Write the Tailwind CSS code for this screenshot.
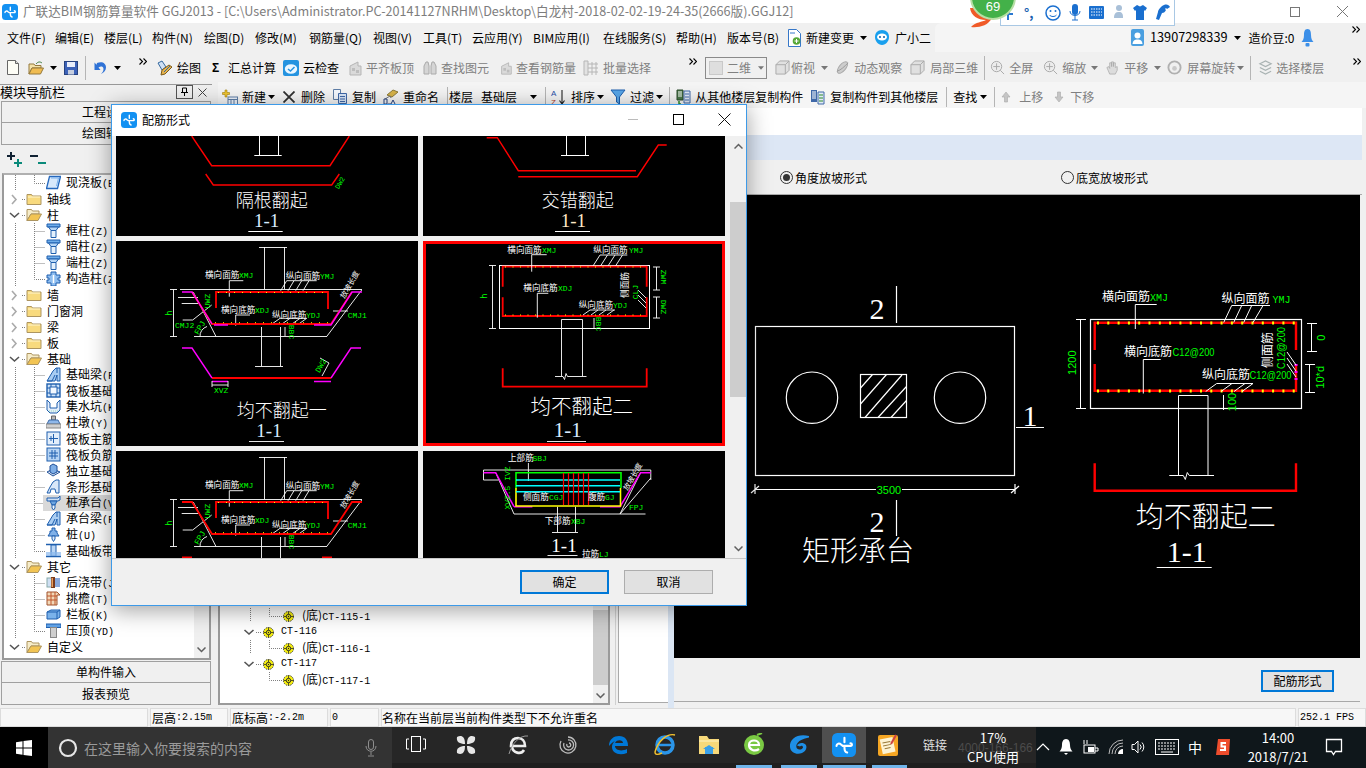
<!DOCTYPE html>
<html lang="zh-CN">
<head>
<meta charset="utf-8">
<title>广联达BIM钢筋算量软件</title>
<script src="https://cdn.jsdelivr.net/npm/@tailwindcss/browser@4"></script>
</head>
<body class="m-0 overflow-hidden">
<svg class="absolute w-0 h-0" aria-hidden="true">
  <symbol id="logo" viewBox="0 0 16 16"><rect width="16" height="16" rx="3.5" fill="#1391f2"/><path d="M3 8.600c0-1.600 1.900-2.100 3-.9l1.200.9h5.200c1.200 0 1.200-1.800-.1-1.800M8.300 3.200v3M8.300 9.600c0 1.800.4 3.200 1.800 3.400" fill="none" stroke="#fff" stroke-width="1.400" stroke-linecap="round"/></symbol>
  <symbol id="tri" viewBox="0 0 7 4"><path d="M0 0h7L3.500 4z" fill="#000"/></symbol>
  <symbol id="trig" viewBox="0 0 7 4"><path d="M0 0h7L3.500 4z" fill="#777"/></symbol>
  <symbol id="dbl" viewBox="0 0 8 7"><path d="M.5.500l3 3-3 3M4.500.500l3 3-3 3" fill="none" stroke="#000" stroke-width="1.100"/></symbol>
  <symbol id="doc" viewBox="0 0 12 15"><path d="M.5.500h8l3 3v11H.5z" fill="#fdfdf6" stroke="#666"/><path d="M8.500.500v3h3" fill="#ddd" stroke="#666"/></symbol>
  <symbol id="open" viewBox="0 0 16 14"><path d="M1 3h5l1 1.500h6V7H4L1 13z" fill="#f4e2a8" stroke="#94793c"/><path d="M4 7h11.500L12.500 13H1z" fill="#f0bc52" stroke="#94793c"/><path d="M8 3c2-2.500 4-2.500 6-1" fill="none" stroke="#3b7a3b"/></symbol>
  <symbol id="save" viewBox="0 0 14 14"><rect x=".5" y=".5" width="13" height="13" fill="#3c62b8" stroke="#27427f"/><rect x="3" y="1" width="8" height="5" fill="#e9eefb"/><rect x="4" y="9" width="6" height="4.500" fill="#c7cfdf"/></symbol>
  <symbol id="undo" viewBox="0 0 13 15"><path d="M3 3c5-2 9 0 9 4.500 0 3-2 5-5 6.500 2-2 2.800-3.800 2.400-5.800C9 6.200 6.500 6 4.500 7.500L6.500 10H.5V2.500l2 2.300z" fill="#2f72d6"/></symbol>
  <symbol id="brush" viewBox="0 0 16 16"><path d="M1 3l4-2 4 6-4 3z" fill="#cfe0f4" stroke="#34689f"/><path d="M5 10l7-5 3 2-7 7-4 1z" fill="#e7b44e" stroke="#7a5a1c"/><path d="M7 12l6-6" stroke="#34689f"/></symbol>
  <symbol id="cloud" viewBox="0 0 16 16"><rect width="16" height="16" rx="2" fill="#2493e0"/><ellipse cx="8" cy="9" rx="6.200" ry="4.800" fill="#eaf6ff"/><path d="M5 9l2.500 2L11.500 7" fill="none" stroke="#2493e0" stroke-width="1.500"/></symbol>
  <symbol id="gbox" viewBox="0 0 16 16"><path d="M3 15V6l8-4v4h3v9z" fill="#dadada" stroke="#b5b5b5"/><path d="M5 8h3v3H5zM9 10h3v3H9z" fill="#bdbdbd"/></symbol>
  <symbol id="gbino" viewBox="0 0 16 16"><path d="M2 14V6l2-4h2l1 4v8zM9 14V6l1-4h2l2 4v8z" fill="#d5d5d5" stroke="#aaa"/></symbol>
  <symbol id="ggrid" viewBox="0 0 16 16"><path d="M1 1h4v14H1zM5 4h10M5 8h10M5 12h10M9 2v13M13 2v13" fill="#e2e2e2" stroke="#b6b6b6"/></symbol>
  <symbol id="gcube" viewBox="0 0 16 16"><path d="M1 5l4-4h10v10l-4 4H1z" fill="#e0e0e0" stroke="#a9a9a9"/><path d="M1 5h10v10M11 5l4-4" fill="none" stroke="#a9a9a9"/></symbol>
  <symbol id="gswirl" viewBox="0 0 16 16"><ellipse cx="8" cy="8" rx="3.500" ry="7.500" transform="rotate(40 8 8)" fill="#cdcdcd" stroke="#aaa"/><path d="M2 12C6 11 10 7 14 3" stroke="#999" fill="none"/></symbol>
  <symbol id="gzoom" viewBox="0 0 16 16"><circle cx="7" cy="7" r="5.500" fill="#ececec" stroke="#a8a8a8"/><path d="M7 3.500v7M3.500 7h7M11 11l4 4" stroke="#a8a8a8" fill="none"/></symbol>
  <symbol id="ghand" viewBox="0 0 16 16"><path d="M5 15L2 8l2-1 1 2V3h2v4-5h2v5-4h2v5l2-1v4l-2 4z" fill="#dcdcdc" stroke="#aaa" stroke-width=".8"/></symbol>
  <symbol id="grot" viewBox="0 0 16 16"><circle cx="8" cy="8" r="6.500" fill="none" stroke="#b0b0b0" stroke-width="2"/><circle cx="8" cy="9" r="2.500" fill="#c9c9c9"/></symbol>
  <symbol id="glayer" viewBox="0 0 16 16"><path d="M2 4l6-3 6 3-6 3zM2 8l6 3 6-3M2 12l6 3 6-3" fill="none" stroke="#a9b3b3" stroke-width="1.300"/></symbol>
  <symbol id="new2" viewBox="0 0 16 16"><path d="M3 1h2v2.500h2.500v2H5V8H3V5.500H.5v-2H3z" fill="#f0c52f" stroke="#a37f0c" stroke-width=".6"/><rect x="6" y="8" width="9.500" height="7.500" fill="#eef4fc" stroke="#5f7fa8"/><path d="M6 10.500h9.500M9 10.500v5M12 10.500v5" stroke="#5f7fa8"/></symbol>
  <symbol id="x" viewBox="0 0 12 12"><path d="M.5.500l11 11M11.500.500l-11 11" stroke="#2f2f2f" stroke-width="1.800" fill="none"/></symbol>
  <symbol id="copy" viewBox="0 0 14 15"><path d="M.5.500h7v10H.5z" fill="#f5f9ff" stroke="#5f7fa8"/><path d="M5.500 4.500h8v10h-8z" fill="#d8e6f8" stroke="#3f68a8"/><path d="M7 7.500h5M7 10h5M7 12.500h5" stroke="#3f68a8"/></symbol>
  <symbol id="ren" viewBox="0 0 15 15"><path d="M4 6l6-5 5 2-6 5z" fill="#d8b44a" stroke="#8b7a3a"/><path d="M2 10l5-3 1 2" stroke="#777" fill="none"/><path d="M1 15V10h3v5zM8 15l2-4 2 4M5 15h3" fill="none" stroke="#27427f"/></symbol>
  <symbol id="filt" viewBox="0 0 16 16"><path d="M1 1h14L9.500 8v7l-3-2V8z" fill="#58a6e8" stroke="#1d5fae"/></symbol>
  <symbol id="fromf" viewBox="0 0 15 16"><path d="M1 1h6v10H1z" fill="#4a7a4a" stroke="#2a4a2a"/><path d="M2 3h4M2 5h4M2 7h4" stroke="#fff"/><path d="M8 2h6v12H8z" fill="#e2eaf6" stroke="#3f68a8"/><path d="M9 5h4M9 8h4M9 11h4" stroke="#3f68a8"/><path d="M3 12v3h2" stroke="#2a8a2a" fill="none" stroke-width="1.500"/></symbol>
  <symbol id="tof" viewBox="0 0 15 16"><path d="M1 1h6v12H1z" fill="#3f68a8"/><path d="M2 3h4M2 5h4M2 7h4M2 9h4" stroke="#fff"/><path d="M8 3h6v12H8z" fill="#e2eaf6" stroke="#3f68a8"/><path d="M9 6h4M9 9h4M9 12h4" stroke="#2a8a2a"/></symbol>
  <symbol id="up" viewBox="0 0 10 12"><path d="M5 1L1 6h2.500v5h3V6H9z" fill="#c5c5c5" stroke="#aaa" stroke-width=".6"/></symbol>
  <symbol id="dn" viewBox="0 0 10 12"><path d="M5 11L1 6h2.500V1h3v5H9z" fill="#c5c5c5" stroke="#aaa" stroke-width=".6"/></symbol>
  <symbol id="chg" viewBox="0 0 13 18"><path d="M.5.500h8l4 4v13H.5z" fill="#fff" stroke="#3677c8"/><path d="M2 4h5" stroke="#3677c8"/><circle cx="8.500" cy="12" r="3.800" fill="#57a838"/><path d="M8.500 10v4M6.500 12h4" stroke="#fff"/></symbol>
  <symbol id="bot" viewBox="0 0 16 18"><path d="M8 1c4.500 0 7 3 7 7s-3 8-7 8-7-4-7-8 2.500-7 7-7z" fill="#19a0ee"/><ellipse cx="8" cy="8" rx="5" ry="3.500" fill="#fff"/><circle cx="6" cy="8" r="1" fill="#0b5fa8"/><circle cx="10" cy="8" r="1" fill="#0b5fa8"/></symbol>
  <symbol id="user" viewBox="0 0 13 17"><rect width="13" height="17" rx="2" fill="#4a9fe0"/><circle cx="6.500" cy="6.500" r="3" fill="#fff"/><path d="M1.500 15c.5-3.500 2-4.500 5-4.500s4.500 1 5 4.500z" fill="#fff"/></symbol>
  <symbol id="bell" viewBox="0 0 13 20"><path d="M6.500 1C9.500 1 10 4 10 7c0 4 1.500 6 2.500 7H.5C1.500 13 3 11 3 7c0-3 .5-6 3.500-6z" fill="#3c8fe8"/><rect x="4.500" y="15" width="4" height="3.500" rx="1" fill="#3c8fe8"/></symbol>
  <symbol id="plus" viewBox="0 0 16 16"><path d="M11 7v8M7 11h8" stroke="#0a8a7a" stroke-width="2" fill="none"/><path d="M4 0v8M0 4h8" stroke="#123" stroke-width="2" fill="none"/></symbol>
  <symbol id="minus" viewBox="0 0 16 16"><path d="M0 4h8" stroke="#123" stroke-width="2"/><path d="M8 11h8" stroke="#0a8a7a" stroke-width="2"/></symbol>
  <symbol id="fc" viewBox="0 0 16 15"><path d="M1 3.500h4.500l1 1.500H15v8.500H1z" fill="#f8da7e" stroke="#ad9560"/><path d="M2 6h12" stroke="#fff6cf"/></symbol>
  <symbol id="fo" viewBox="0 0 16 15"><path d="M1 2.500h4.500l1 1.500H13v3H5L1 13.500z" fill="#f6ecc9" stroke="#ad9560"/><path d="M5 7h10.500L12 13.500H1z" fill="#f2c453" stroke="#ad9560"/></symbol>
  <symbol id="slab" viewBox="0 0 15 15"><path d="M3.500 1.500h11L11.500 13.500H.5z" fill="#d8e9fb" stroke="#2568bd" stroke-width="1.300"/><path d="M5 3h7.500l-2 8" fill="none" stroke="#7ab2ee"/></symbol>
  <symbol id="colt" viewBox="0 0 15 15"><path d="M1 1h13v3H1z" fill="#6eadea" stroke="#1f5fae"/><path d="M2.500 4h10L10 7.500H5z" fill="#b6d6f6" stroke="#1f5fae"/><path d="M5 7.500h5v7H5z" fill="#e3f0fc" stroke="#1f5fae"/></symbol>
  <symbol id="gcol" viewBox="0 0 15 15"><path d="M5 1h5v3h4v3h-2v2h2v3h-4v3H5v-3H1V9h2V7H1V4h4z" fill="#8fbef0" stroke="#1f5fae"/><path d="M7.500 4v8" stroke="#fff" stroke-width="1.500"/></symbol>
  <symbol id="beam" viewBox="0 0 15 15"><path d="M1 14L7 4l3-3h4v13h-3V8l-2 6z" fill="#a9cdf2" stroke="#1f5fae"/><path d="M1 14h5l3-6M11 1v5" fill="none" stroke="#1f5fae"/></symbol>
  <symbol id="raft" viewBox="0 0 15 15"><rect x="1" y="1" width="13" height="13" fill="#cfe3f8" stroke="#1f5fae" stroke-width="1.400"/><rect x="4" y="4" width="7" height="7" fill="#f4f9ff" stroke="#1f5fae"/><path d="M1 5h3M1 10h3M11 5h3M11 10h3M5 1v3M10 1v3M5 11v3M10 11v3" stroke="#1f5fae"/></symbol>
  <symbol id="pit" viewBox="0 0 15 15"><path d="M1 1l3 3v5h7V4l3-3v10l-3 3H4l-3-3z" fill="#e4eefb" stroke="#1f5fae"/><path d="M3 12h9" stroke="#9db" stroke-dasharray="1 1"/></symbol>
  <symbol id="pier" viewBox="0 0 15 15"><path d="M5.500 1h4v4h-4z" fill="#b8b8b8" stroke="#666"/><path d="M3 5h9l2 4H1z" fill="#8fb8ea" stroke="#3c6aa8"/><path d="M0 9h15v4H0z" fill="#d0d0d0" stroke="#888"/></symbol>
  <symbol id="rmain" viewBox="0 0 15 15"><rect x="1" y="1" width="13" height="13" fill="#e2eefb" stroke="#1f5fae"/><path d="M3 7.500h9M7.500 3v9M5 5v5" stroke="#1f5fae" fill="none"/></symbol>
  <symbol id="rneg" viewBox="0 0 15 15"><rect x="1" y="1" width="13" height="13" fill="#b6d4f4" stroke="#1f5fae"/><path d="M3 6h9M3 9h9M6 3v9M9 3v9" stroke="#1f5fae" fill="none"/></symbol>
  <symbol id="iso" viewBox="0 0 15 15"><path d="M1 9l6-3 7 3-7 4z" fill="#dfe9f6" stroke="#1f4f98"/><path d="M4 9V3l3-2 4 2v6l-4 2z" fill="#7eaee6" stroke="#1f4f98"/></symbol>
  <symbol id="strip" viewBox="0 0 15 15"><path d="M1 14l3-6 3-5 3-2h3v13h-3l-1-4H5l-1 4z" fill="#d9e7f8" stroke="#1f5fae"/></symbol>
  <symbol id="cap" viewBox="0 0 15 15"><path d="M1 3h11l2-2v4l-2 1H1z" fill="#cfe0f4" stroke="#1f5fae"/><path d="M4 6h7L9 10H6z" fill="#6ea5e0" stroke="#1f5fae"/><path d="M6 10h3v3l-1.500 2L6 13z" fill="#f0f6fd" stroke="#1f5fae"/></symbol>
  <symbol id="pile" viewBox="0 0 15 15"><path d="M6 1h3v3h2v2l2 3H2l2-3V4h2z" fill="#7fb0e8" stroke="#1f5fae"/><path d="M6 9h3v3l-1.500 2.500L6 12z" fill="#dceafa" stroke="#1f5fae"/></symbol>
  <symbol id="band" viewBox="0 0 15 15"><path d="M0 1.500h15M0 13.500h15" stroke="#1f5fae" stroke-width="1.400"/><rect x="5" y="2" width="5" height="11" fill="#b9d5f4" stroke="#1f5fae"/><rect x="0" y="9" width="15" height="4" fill="#8ab8ec" opacity=".7"/></symbol>
  <symbol id="post" viewBox="0 0 15 15"><rect x="1" y="3" width="5" height="9" fill="#cfdff3" stroke="#8aa"/><rect x="9" y="3" width="5" height="9" fill="#8aa9dc"/><rect x="5" y="2" width="4" height="11" fill="#7a3a1c"/><rect x="5.500" y="3" width="1.500" height="9" fill="#e8a060"/></symbol>
  <symbol id="eave" viewBox="0 0 15 15"><path d="M1 1h10l3 3h-3v10H1z" fill="#f2d8b8" stroke="#a0522d"/><path d="M1 5h10M1 9h10M5 1v13M9 1v13" stroke="#c0562c"/></symbol>
  <symbol id="rail" viewBox="0 0 15 15"><path d="M1 5l4-2h9v7l-3 2H1z" fill="#7ab2ea" stroke="#1f5fae"/><path d="M1 5h10v7M11 5l3-2" fill="none" stroke="#1f5fae"/></symbol>
  <symbol id="cope" viewBox="0 0 15 15"><rect x="0" y="1" width="15" height="3.500" fill="#5fa0e4" stroke="#1f5fae"/><rect x="4.500" y="4.500" width="6" height="10" fill="#cfcfcf" stroke="#888"/></symbol>
  <symbol id="ro" viewBox="0 0 26 16"><path d="M10 6l4.500 4L19 6" fill="none" stroke="#555" stroke-width="1.600"/><path d="M22 8.500h4" stroke="#808080" stroke-dasharray="1 1"/></symbol>
  <symbol id="rc" viewBox="0 0 26 16"><path d="M12 4l4 4.500-4 4.500" fill="none" stroke="#aaa" stroke-width="1.600"/><path d="M22 8.500h4" stroke="#808080" stroke-dasharray="1 1"/></symbol>
  <symbol id="cm" viewBox="0 0 46 16"><path d="M15.500 0v16M34.500 0v16M34.500 8.500H45" stroke="#808080" stroke-dasharray="1 1" fill="none"/></symbol>
  <symbol id="cl" viewBox="0 0 46 16"><path d="M15.500 0v16M34.500 0v8.500H45" stroke="#808080" stroke-dasharray="1 1" fill="none"/></symbol>
  <symbol id="gold" viewBox="0 0 12 12"><circle cx="6" cy="6" r="5.500" fill="#f5ee10" stroke="#222" stroke-width="1" stroke-dasharray="1.400 1.100"/><path d="M6 .5v11M.5 6h11" stroke="#222" stroke-width=".8"/><circle cx="6" cy="6" r="2.400" fill="#f5ee10" stroke="#222" stroke-width="1"/><circle cx="6" cy="6" r=".7" fill="#222"/></symbol>
  <symbol id="zr" viewBox="0 0 43 16"><path d="M24.500 6l4.500 4 4.500-4" fill="none" stroke="#555" stroke-width="1.600"/><path d="M36 8.500h6" stroke="#808080" stroke-dasharray="1 1"/></symbol>
  <symbol id="zc" viewBox="0 0 63 16"><path d="M30.500 0v14" stroke="#808080" stroke-dasharray="1 1"/><path d="M49.500 0v8.500H62" stroke="#808080" stroke-dasharray="1 1" fill="none"/></symbol>
</svg>

<div class="relative w-[1366px] h-[768px] overflow-hidden bg-[#f0f0f0] text-[12px] text-black [font-family:'Noto_Sans_CJK_SC','Liberation_Sans',sans-serif] leading-none">

  <!-- title bar -->
  <div class="h-[23px] bg-white flex items-center">
    <svg class="ml-[2px] w-[16px] h-[16px] shrink-0"><use href="#logo"/></svg>
    <span class="ml-[5px] text-[12.63px] text-[#7d7d7d] whitespace-nowrap">广联达BIM钢筋算量软件 GGJ2013 - [C:\Users\Administrator.PC-20141127NRHM\Desktop\白龙村-2018-02-02-19-24-35(2666版).GGJ12]</span>
    <div class="ml-auto flex items-center">
      <div class="w-[10px] h-[10px] border border-[#777] mr-[37px]"></div>
      <svg class="w-[11px] h-[11px] mr-[18px]" viewBox="0 0 11 11"><path d="M0 0l11 11M11 0L0 11" stroke="#777"/></svg>
    </div>
  </div>

  <!-- menu bar -->
  <div class="h-[30px] flex items-center pb-[1px]">
    <div class="w-[784px] pl-[7px] flex items-center whitespace-nowrap shrink-0">
      <span class="w-[48px]">文件(F)</span><span class="w-[49px]">编辑(E)</span><span class="w-[48px]">楼层(L)</span><span class="w-[52px]">构件(N)</span><span class="w-[51px]">绘图(D)</span><span class="w-[54px]">修改(M)</span><span class="w-[64px]">钢筋量(Q)</span><span class="w-[50px]">视图(V)</span><span class="w-[49px]">工具(T)</span><span class="w-[61px]">云应用(Y)</span><span class="w-[70px]">BIM应用(I)</span><span class="w-[73px]">在线服务(S)</span><span class="w-[51px]">帮助(H)</span><span>版本号(B)</span>
    </div>
    <svg class="ml-[4px] w-[13px] h-[18px] shrink-0"><use href="#chg"/></svg>
    <span class="ml-[5px]">新建变更</span>
    <svg class="ml-[6px] w-[7px] h-[4px]"><use href="#tri"/></svg>
    <svg class="ml-[7px] w-[16px] h-[18px]"><use href="#bot"/></svg>
    <span class="ml-[5px]">广小二</span>
    <div class="ml-[4px] w-[195px] h-[29px] bg-[#f5f5f5] rounded-tl-md"></div>
    <svg class="ml-[1px] w-[13px] h-[17px]"><use href="#user"/></svg>
    <span class="ml-[6px] text-[12.7px]">13907298339</span>
    <svg class="ml-[6px] w-[7px] h-[4px]"><use href="#tri"/></svg>
    <span class="ml-[8px]">造价豆:0</span>
    <svg class="ml-[6px] w-[13px] h-[20px]"><use href="#bell"/></svg>
    <svg class="ml-[38px] w-[8px] h-[7px] -translate-y-[8px]"><use href="#dbl"/></svg>
  </div>

  <!-- main toolbar -->
  <div class="h-[29px] flex items-center whitespace-nowrap">
    <svg class="ml-[7px] w-[12px] h-[15px]"><use href="#doc"/></svg>
    <svg class="ml-[9px] w-[16px] h-[14px]"><use href="#open"/></svg>
    <svg class="ml-[6px] w-[7px] h-[4px]"><use href="#tri"/></svg>
    <svg class="ml-[7px] w-[14px] h-[14px]"><use href="#save"/></svg>
    <div class="ml-[7px] w-px h-[24px] bg-[#b5b5b5]"></div>
    <svg class="ml-[8px] w-[13px] h-[15px]"><use href="#undo"/></svg>
    <svg class="ml-[7px] w-[7px] h-[4px]"><use href="#tri"/></svg>
    <svg class="ml-[18px] w-[8px] h-[7px] -translate-y-[6px]"><use href="#dbl"/></svg>
    <svg class="ml-[10px] w-[16px] h-[16px]"><use href="#brush"/></svg>
    <span class="ml-[4px]">绘图</span>
    <span class="ml-[11px] w-[9px] font-bold [font-family:'Liberation_Sans']">Σ</span>
    <span class="ml-[7px]">汇总计算</span>
    <svg class="ml-[7px] w-[16px] h-[16px]"><use href="#cloud"/></svg>
    <span class="ml-[4px]">云检查</span>
    <svg class="ml-[8px] w-[16px] h-[16px]"><use href="#gbox"/></svg>
    <span class="ml-[3px] text-[#808080]">平齐板顶</span>
    <svg class="ml-[8px] w-[16px] h-[16px]"><use href="#gbino"/></svg>
    <span class="ml-[3px] text-[#808080]">查找图元</span>
    <svg class="ml-[10px] w-[14px] h-[14px]"><use href="#gbox"/></svg>
    <span class="ml-[3px] text-[#808080]">查看钢筋量</span>
    <svg class="ml-[7px] w-[16px] h-[16px]"><use href="#ggrid"/></svg>
    <span class="ml-[4px] text-[#808080]">批量选择</span>
    <svg class="ml-[38px] w-[8px] h-[7px] -translate-y-[6px]"><use href="#dbl"/></svg>
    <div class="ml-[8px] w-[62px] h-[22px] border border-[#8a8a8a] flex items-center">
      <div class="ml-[3px] w-[14px] h-[14px] bg-[#dedede] border border-[#c9c9c9]"></div>
      <span class="ml-[4px] text-[#808080]">二维</span>
      <svg class="ml-[7px] w-[6px] h-[4px]"><use href="#trig"/></svg>
    </div>
    <svg class="ml-[8px] w-[15px] h-[15px]"><use href="#gcube"/></svg>
    <span class="ml-[1px] text-[#808080]">俯视</span>
    <svg class="ml-[6px] w-[7px] h-[4px]"><use href="#trig"/></svg>
    <svg class="ml-[7px] w-[15px] h-[15px]"><use href="#gswirl"/></svg>
    <span class="ml-[4px] text-[#808080]">动态观察</span>
    <svg class="ml-[8px] w-[15px] h-[15px]"><use href="#gcube"/></svg>
    <span class="ml-[5px] text-[#808080]">局部三维</span>
    <div class="ml-[6px] w-px h-[24px] bg-[#b5b5b5]"></div>
    <svg class="ml-[5px] w-[15px] h-[15px]"><use href="#gzoom"/></svg>
    <span class="ml-[4px] text-[#808080]">全屏</span>
    <svg class="ml-[10px] w-[15px] h-[15px]"><use href="#gzoom"/></svg>
    <span class="ml-[4px] text-[#808080]">缩放</span>
    <svg class="ml-[5px] w-[7px] h-[4px]"><use href="#trig"/></svg>
    <svg class="ml-[7px] w-[15px] h-[15px]"><use href="#ghand"/></svg>
    <span class="ml-[4px] text-[#808080]">平移</span>
    <svg class="ml-[6px] w-[7px] h-[4px]"><use href="#trig"/></svg>
    <svg class="ml-[6px] w-[15px] h-[15px]"><use href="#grot"/></svg>
    <span class="ml-[5px] text-[#808080]">屏幕旋转</span>
    <svg class="ml-[2px] w-[7px] h-[4px]"><use href="#trig"/></svg>
    <div class="ml-[6px] w-px h-[24px] bg-[#b5b5b5]"></div>
    <svg class="ml-[7px] w-[15px] h-[15px]"><use href="#glayer"/></svg>
    <span class="ml-[3px] text-[#808080]">选择楼层</span>
    <svg class="ml-[29px] w-[8px] h-[7px] -translate-y-[6px]"><use href="#dbl"/></svg>
  </div>

  <!-- main area -->
  <div class="h-[626px] flex">
    <!-- left navigator -->
    <div class="w-[212px] shrink-0 h-[623px] flex flex-col">
      <div class="h-[17px] mt-[2px] border-t border-[#999] flex items-center text-[13px] relative pb-[3px]">
        <span class="whitespace-nowrap">模块导航栏</span>
        <div class="ml-auto mr-[19px] w-[17px] h-[14px] border border-[#555] flex items-center justify-center">
          <svg class="w-[9px] h-[9px]" viewBox="0 0 9 9"><path d="M2.500 1h4v4.500h-4zM1 5.500h7M4.500 5.500V9" fill="none" stroke="#000"/></svg>
        </div>
        <svg class="absolute left-[198px] top-[3px] w-[9px] h-[9px]" viewBox="0 0 9 9"><path d="M.5.500l8 8M8.500.500l-8 8" stroke="#444"/></svg>
      </div>
      <div class="h-[22px] mx-px border border-[#a0a0a0] bg-[#f0f0f0] flex items-center justify-center">工程设置</div>
      <div class="h-[22px] mx-px border-x border-b border-[#a0a0a0] flex items-center justify-center">绘图输入</div>
      <div class="h-[28px] flex items-center pt-[2px]">
        <svg class="ml-[7px] w-[16px] h-[16px]"><use href="#plus"/></svg>
        <svg class="ml-[7px] w-[16px] h-[16px]"><use href="#minus"/></svg>
      </div>
      <!-- tree -->
      <div class="ml-[2px] w-[209px] h-[488px] border-2 border-[#9a9a9a] border-t-[#b0b0b0] bg-white flex overflow-hidden">
        <div class="flex-1 min-w-0 whitespace-nowrap -ml-[4px] text-[12px]">
          <div class="h-4 flex items-center"><svg class="w-[46px] h-4 shrink-0"><use href="#cl"/></svg><svg class="w-[15px] h-[15px]"><use href="#slab"/></svg><span class="ml-[5px]">现浇板<span class="text-[10px] [font-family:'Liberation_Mono']">(B)</span></span></div>
          <div class="h-4 flex items-center"><svg class="w-[26px] h-4 shrink-0"><use href="#rc"/></svg><svg class="w-[16px] h-[15px]"><use href="#fc"/></svg><span class="ml-[5px]">轴线</span></div>
          <div class="h-4 flex items-center"><svg class="w-[26px] h-4 shrink-0"><use href="#ro"/></svg><svg class="w-[16px] h-[15px]"><use href="#fo"/></svg><span class="ml-[5px]">柱</span></div>
          <div class="h-4 flex items-center"><svg class="w-[46px] h-4 shrink-0"><use href="#cm"/></svg><svg class="w-[15px] h-[15px]"><use href="#colt"/></svg><span class="ml-[5px]">框柱<span class="text-[10px] [font-family:'Liberation_Mono']">(Z)</span></span></div>
          <div class="h-4 flex items-center"><svg class="w-[46px] h-4 shrink-0"><use href="#cm"/></svg><svg class="w-[15px] h-[15px]"><use href="#colt"/></svg><span class="ml-[5px]">暗柱<span class="text-[10px] [font-family:'Liberation_Mono']">(Z)</span></span></div>
          <div class="h-4 flex items-center"><svg class="w-[46px] h-4 shrink-0"><use href="#cm"/></svg><svg class="w-[15px] h-[15px]"><use href="#colt"/></svg><span class="ml-[5px]">端柱<span class="text-[10px] [font-family:'Liberation_Mono']">(Z)</span></span></div>
          <div class="h-4 flex items-center"><svg class="w-[46px] h-4 shrink-0"><use href="#cl"/></svg><svg class="w-[15px] h-[15px]"><use href="#gcol"/></svg><span class="ml-[5px]">构造柱<span class="text-[10px] [font-family:'Liberation_Mono']">(Z)</span></span></div>
          <div class="h-4 flex items-center"><svg class="w-[26px] h-4 shrink-0"><use href="#rc"/></svg><svg class="w-[16px] h-[15px]"><use href="#fc"/></svg><span class="ml-[5px]">墙</span></div>
          <div class="h-4 flex items-center"><svg class="w-[26px] h-4 shrink-0"><use href="#rc"/></svg><svg class="w-[16px] h-[15px]"><use href="#fc"/></svg><span class="ml-[5px]">门窗洞</span></div>
          <div class="h-4 flex items-center"><svg class="w-[26px] h-4 shrink-0"><use href="#rc"/></svg><svg class="w-[16px] h-[15px]"><use href="#fc"/></svg><span class="ml-[5px]">梁</span></div>
          <div class="h-4 flex items-center"><svg class="w-[26px] h-4 shrink-0"><use href="#rc"/></svg><svg class="w-[16px] h-[15px]"><use href="#fc"/></svg><span class="ml-[5px]">板</span></div>
          <div class="h-4 flex items-center"><svg class="w-[26px] h-4 shrink-0"><use href="#ro"/></svg><svg class="w-[16px] h-[15px]"><use href="#fo"/></svg><span class="ml-[5px]">基础</span></div>
          <div class="h-4 flex items-center"><svg class="w-[46px] h-4 shrink-0"><use href="#cm"/></svg><svg class="w-[15px] h-[15px]"><use href="#beam"/></svg><span class="ml-[5px]">基础梁<span class="text-[10px] [font-family:'Liberation_Mono']">(F)</span></span></div>
          <div class="h-4 flex items-center"><svg class="w-[46px] h-4 shrink-0"><use href="#cm"/></svg><svg class="w-[15px] h-[15px]"><use href="#raft"/></svg><span class="ml-[5px]">筏板基础</span></div>
          <div class="h-4 flex items-center"><svg class="w-[46px] h-4 shrink-0"><use href="#cm"/></svg><svg class="w-[15px] h-[15px]"><use href="#pit"/></svg><span class="ml-[5px]">集水坑<span class="text-[10px] [font-family:'Liberation_Mono']">(K)</span></span></div>
          <div class="h-4 flex items-center"><svg class="w-[46px] h-4 shrink-0"><use href="#cm"/></svg><svg class="w-[15px] h-[15px]"><use href="#pier"/></svg><span class="ml-[5px]">柱墩<span class="text-[10px] [font-family:'Liberation_Mono']">(Y)</span></span></div>
          <div class="h-4 flex items-center"><svg class="w-[46px] h-4 shrink-0"><use href="#cm"/></svg><svg class="w-[15px] h-[15px]"><use href="#rmain"/></svg><span class="ml-[5px]">筏板主筋</span></div>
          <div class="h-4 flex items-center"><svg class="w-[46px] h-4 shrink-0"><use href="#cm"/></svg><svg class="w-[15px] h-[15px]"><use href="#rneg"/></svg><span class="ml-[5px]">筏板负筋</span></div>
          <div class="h-4 flex items-center"><svg class="w-[46px] h-4 shrink-0"><use href="#cm"/></svg><svg class="w-[15px] h-[15px]"><use href="#iso"/></svg><span class="ml-[5px]">独立基础</span></div>
          <div class="h-4 flex items-center"><svg class="w-[46px] h-4 shrink-0"><use href="#cm"/></svg><svg class="w-[15px] h-[15px]"><use href="#strip"/></svg><span class="ml-[5px]">条形基础</span></div>
          <div class="h-4 flex items-center"><svg class="w-[43px] h-4 shrink-0" viewBox="0 0 43 16"><path d="M15.500 0v16M34.500 0v16M34.500 8.500H43" stroke="#808080" stroke-dasharray="1 1" fill="none"/></svg><div class="flex-1 h-4 bg-[#d9d9d9] pl-[3px] flex items-center"><svg class="w-[15px] h-[15px]"><use href="#cap"/></svg><span class="ml-[5px]">桩承台<span class="text-[10px] [font-family:'Liberation_Mono']">(V)</span></span></div></div>
          <div class="h-4 flex items-center"><svg class="w-[46px] h-4 shrink-0"><use href="#cm"/></svg><svg class="w-[15px] h-[15px]"><use href="#beam"/></svg><span class="ml-[5px]">承台梁<span class="text-[10px] [font-family:'Liberation_Mono']">(F)</span></span></div>
          <div class="h-4 flex items-center"><svg class="w-[46px] h-4 shrink-0"><use href="#cm"/></svg><svg class="w-[15px] h-[15px]"><use href="#pile"/></svg><span class="ml-[5px]">桩<span class="text-[10px] [font-family:'Liberation_Mono']">(U)</span></span></div>
          <div class="h-4 flex items-center"><svg class="w-[46px] h-4 shrink-0"><use href="#cl"/></svg><svg class="w-[15px] h-[15px]"><use href="#band"/></svg><span class="ml-[5px]">基础板带</span></div>
          <div class="h-4 flex items-center"><svg class="w-[26px] h-4 shrink-0"><use href="#ro"/></svg><svg class="w-[16px] h-[15px]"><use href="#fo"/></svg><span class="ml-[5px]">其它</span></div>
          <div class="h-4 flex items-center"><svg class="w-[46px] h-4 shrink-0"><use href="#cm"/></svg><svg class="w-[15px] h-[15px]"><use href="#post"/></svg><span class="ml-[5px]">后浇带<span class="text-[10px] [font-family:'Liberation_Mono']">(J)</span></span></div>
          <div class="h-4 flex items-center"><svg class="w-[46px] h-4 shrink-0"><use href="#cm"/></svg><svg class="w-[15px] h-[15px]"><use href="#eave"/></svg><span class="ml-[5px]">挑檐<span class="text-[10px] [font-family:'Liberation_Mono']">(T)</span></span></div>
          <div class="h-4 flex items-center"><svg class="w-[46px] h-4 shrink-0"><use href="#cm"/></svg><svg class="w-[15px] h-[15px]"><use href="#rail"/></svg><span class="ml-[5px]">栏板<span class="text-[10px] [font-family:'Liberation_Mono']">(K)</span></span></div>
          <div class="h-4 flex items-center"><svg class="w-[46px] h-4 shrink-0"><use href="#cl"/></svg><svg class="w-[15px] h-[15px]"><use href="#cope"/></svg><span class="ml-[5px]">压顶<span class="text-[10px] [font-family:'Liberation_Mono']">(YD)</span></span></div>
          <div class="h-4 flex items-center"><svg class="w-[26px] h-4 shrink-0"><use href="#ro"/></svg><svg class="w-[16px] h-[15px]"><use href="#fo"/></svg><span class="ml-[5px]">自定义</span></div>
        </div>
        <div class="w-[15px] shrink-0 bg-[#f0f0f0] flex flex-col justify-end items-center pb-[5px]">
          <svg class="w-[9px] h-[6px]" viewBox="0 0 9 6"><path d="M.5.500l4 4 4-4" fill="none" stroke="#606060" stroke-width="1.500"/></svg>
        </div>
      </div>
      <div class="h-[22px] mt-[1px] mx-px border border-[#a0a0a0] flex items-center justify-center">单构件输入</div>
      <div class="h-[22px] mx-px border-x border-b border-[#a0a0a0] flex items-center justify-center">报表预览</div>
    </div>

    <!-- right of navigator -->
    <div class="ml-[6px] flex-1 flex flex-col min-w-0">
      <!-- secondary toolbar -->
      <div class="h-[26px] pt-[3px] bg-[#f5f5f5] flex items-center whitespace-nowrap shrink-0">
        <svg class="ml-[4px] w-[16px] h-[16px]"><use href="#new2"/></svg>
        <span class="ml-[4px]">新建</span>
        <svg class="ml-[2px] w-[7px] h-[4px]"><use href="#tri"/></svg>
        <svg class="ml-[8px] w-[12px] h-[12px]"><use href="#x"/></svg>
        <span class="ml-[6px]">删除</span>
        <svg class="ml-[8px] w-[14px] h-[15px]"><use href="#copy"/></svg>
        <span class="ml-[5px]">复制</span>
        <svg class="ml-[7px] w-[15px] h-[15px]"><use href="#ren"/></svg>
        <span class="ml-[5px]">重命名</span>
        <div class="ml-[8px] w-px h-[20px] bg-[#b5b5b5]"></div>
        <span class="ml-px">楼层</span>
        <span class="ml-[8px]">基础层</span>
        <svg class="ml-[13px] w-[7px] h-[4px]"><use href="#tri"/></svg>
        <div class="ml-[8px] w-px h-[20px] bg-[#b5b5b5]"></div>
        <svg class="ml-[5px] w-[15px] h-[16px]" viewBox="0 0 15 16"><text x="0" y="7" font-size="8" fill="#1f4fa8" font-family="Liberation Sans">A</text><text x="0" y="15.500" font-size="8" fill="#b13a2a" font-family="Liberation Sans">Z</text><path d="M11 1v13M8.500 11.500L11 15l2.500-3.500" fill="none" stroke="#222" stroke-width="1.100"/></svg>
        <span class="ml-[5px]">排序</span>
        <svg class="ml-[2px] w-[7px] h-[4px]"><use href="#tri"/></svg>
        <svg class="ml-[6px] w-[16px] h-[16px]"><use href="#filt"/></svg>
        <span class="ml-[4px]">过滤</span>
        <svg class="ml-[2px] w-[7px] h-[4px]"><use href="#tri"/></svg>
        <div class="ml-[6px] w-px h-[20px] bg-[#b5b5b5]"></div>
        <svg class="ml-[6px] w-[15px] h-[16px]"><use href="#fromf"/></svg>
        <span class="ml-[4px]">从其他楼层复制构件</span>
        <svg class="ml-[7px] w-[15px] h-[16px]"><use href="#tof"/></svg>
        <span class="ml-[5px]">复制构件到其他楼层</span>
        <div class="ml-[8px] w-px h-[20px] bg-[#b5b5b5]"></div>
        <span class="ml-[6px]">查找</span>
        <svg class="ml-[3px] w-[7px] h-[4px]"><use href="#tri"/></svg>
        <div class="ml-[7px] w-px h-[20px] bg-[#b5b5b5]"></div>
        <svg class="ml-[6px] w-[10px] h-[12px]"><use href="#up"/></svg>
        <span class="ml-[8px] text-[#808080]">上移</span>
        <svg class="ml-[11px] w-[10px] h-[12px]"><use href="#dn"/></svg>
        <span class="ml-[6px] text-[#808080]">下移</span>
      </div>

      <div class="flex-1 flex min-h-0">
        <!-- member tree -->
        <div class="w-[392px] h-[597px] shrink-0 border-2 border-[#9a9a9a] border-t-0 bg-white flex">
          <div class="flex-1 flex flex-col justify-end pb-[15px] whitespace-nowrap [font-family:'Liberation_Mono','Noto_Sans_CJK_SC',monospace] text-[10px]">
            <div class="h-4 flex items-center"><svg class="w-[63px] h-4 shrink-0"><use href="#zc"/></svg><svg class="w-[11px] h-[11px]"><use href="#gold"/></svg><span class="ml-[8px]"><span class="text-[12px] [font-family:'Noto_Sans_CJK_SC']">(底)</span>CT-115-1</span></div>
            <div class="h-4 flex items-center"><svg class="w-[43px] h-4 shrink-0"><use href="#zr"/></svg><svg class="w-[11px] h-[11px]"><use href="#gold"/></svg><span class="ml-[7px]">CT-116</span></div>
            <div class="h-4 flex items-center"><svg class="w-[63px] h-4 shrink-0"><use href="#zc"/></svg><svg class="w-[11px] h-[11px]"><use href="#gold"/></svg><span class="ml-[8px]"><span class="text-[12px] [font-family:'Noto_Sans_CJK_SC']">(底)</span>CT-116-1</span></div>
            <div class="h-4 flex items-center"><svg class="w-[43px] h-4 shrink-0"><use href="#zr"/></svg><svg class="w-[11px] h-[11px]"><use href="#gold"/></svg><span class="ml-[7px]">CT-117</span></div>
            <div class="h-4 flex items-center"><svg class="w-[63px] h-4 shrink-0" viewBox="0 0 63 16"><path d="M49.500 0v8.500H62" stroke="#808080" stroke-dasharray="1 1" fill="none"/></svg><svg class="w-[11px] h-[11px]"><use href="#gold"/></svg><span class="ml-[8px]"><span class="text-[12px] [font-family:'Noto_Sans_CJK_SC']">(底)</span>CT-117-1</span></div>
          </div>
          <div class="w-[15px] shrink-0 bg-[#f0f0f0] flex flex-col items-center pb-[4px] pt-[3px]">
            <div class="flex-1 w-full bg-[#cdcdcd] mb-[8px] mt-[499px]"></div>
            <svg class="w-[9px] h-[6px]" viewBox="0 0 9 6"><path d="M.5.500l4 4 4-4" fill="none" stroke="#606060" stroke-width="1.500"/></svg>
          </div>
        </div>
        <!-- small panel -->
        <div class="ml-[5px] w-[53px] h-[597px] shrink-0 border-l border-[#d0d0d0] bg-[#f0f0f0] pl-[2px] pb-[2px]">
          <div class="w-full h-full border-l border-b border-[#aaa] bg-white"></div>
        </div>
        <div class="w-[6px] shrink-0 bg-[#dbe6f4]"></div>
        <!-- drawing panel -->
        <div class="w-[688px] shrink-0 flex flex-col">
          <div class="h-[27px] bg-white"></div>
          <div class="h-[25px] bg-[#dde7f5]"></div>
          <div class="h-[35px] pt-[1px] bg-[#f0f0f0] border-b border-[#aaa] flex items-center text-[12px]">
            <div class="ml-[106px] w-[13px] h-[13px] rounded-full border border-[#333] flex items-center justify-center"><div class="w-[7px] h-[7px] rounded-full bg-[#333]"></div></div>
            <span class="ml-[2px]">角度放坡形式</span>
            <div class="ml-[194px] w-[13px] h-[13px] rounded-full border border-[#333]"></div>
            <span class="ml-[2px]">底宽放坡形式</span>
          </div>
          <svg class="block w-[686px] h-[463px] bg-black shrink-0" viewBox="674 195 686 463" fill="none" font-family="Noto Sans CJK SC">
            <!-- plan -->
            <g stroke="#fff" stroke-width="1.200">
              <rect x="755.500" y="326.500" width="259" height="149"/>
              <circle cx="812" cy="397.700" r="25.700"/>
              <circle cx="960" cy="397.700" r="25.700"/>
              <rect x="860.500" y="374.500" width="46" height="43"/>
              <path d="M860.500 388l12-13.500M860.500 404l26-29.500M865 417.500l37-42.500M878 417.500l28.500-31M891 417.500l15.500-17M896.500 286v37M896.500 500v36M1016 427.500h28M755.500 489.500h260M755 484v10M1015 484v10M751 493l8-7M1011 493l8-7"/>
            </g>
            <rect x="876" y="484" width="26" height="10" fill="#000"/>
            <text x="889" y="493.500" text-anchor="middle" font-size="11" fill="#00ff00" font-family="Liberation Sans">3500</text>
            <g font-family="Liberation Serif" fill="#fff" font-size="30" text-anchor="middle">
              <text x="877" y="319">2</text><text x="877" y="532">2</text><text x="1030" y="426">1</text>
            </g>
            <text x="858" y="561" text-anchor="middle" font-size="28" font-weight="300" fill="#fff">矩形承台</text>
            <!-- section -->
            <rect x="1090.500" y="319.500" width="211" height="89" stroke="#fff" stroke-width="1.200"/>
            <g stroke="#ff0000" stroke-width="2.400">
              <path d="M1094.700 350v-27.300H1296V350M1094.700 364v26.700H1296V364M1094.700 463.300v27.400H1296v-27.400"/>
            </g>
            <path d="M1097 323h200M1097 391h200" stroke="#ffff00" stroke-width="3" stroke-dasharray="2 8.300"/>
            <path d="M1296 364v18" stroke="#ff00ff" stroke-width="3" stroke-dasharray="2 5"/>
            <g stroke="#fff" stroke-width="1">
              <path d="M1080.500 319.500v89M1076 319.500h10M1076 408.500h10"/>
              <path d="M1311.500 323.500v28M1307 323.500h10M1307 351.500h10M1309.500 364.500v28M1305 364.500h10M1305 392.500h10"/>
              <path d="M1156.700 304.500h-21.400V329M1231.700 305.500h38.300M1231.700 305.500l-8 17M1241.700 305.500l-8 17M1251.700 305.500l-8 17M1263 305.500l-10 17"/>
              <path d="M1160.700 359.500h-17.400v34M1216.700 383.500h36.300M1216.700 383.500l-11 8M1232 383.500l-11 8M1245 383.500l-11 8M1253 383.500l-11 8"/>
              <path d="M1287 352l9 13M1287 358l9 13M1287 364l9 13"/>
              <path d="M1178.500 475v-79.500h29.500V475M1169.300 475.500h14l2 4 2-7 2 3h24.700M1223.500 395v15"/>
              <path d="M1156.700 567.500h55"/>
            </g>
            <g font-size="12" fill="#fff">
              <text x="1102" y="301">横向面筋</text><text x="1221.500" y="303">纵向面筋</text><text x="1124" y="355.500">横向底筋</text><text x="1202" y="379">纵向底筋</text>
              <text transform="translate(1272 350) rotate(-90)" text-anchor="middle">侧面筋</text>
            </g>
            <g fill="#00ff00" font-family="Liberation Mono" font-size="10">
              <text x="1150" y="301">XMJ</text><text x="1272.500" y="303">YMJ</text>
            </g>
            <g font-size="11" fill="#00ff00" font-family="Liberation Sans">
              <text x="1172.500" y="355.500" textLength="42" lengthAdjust="spacingAndGlyphs">C12@200</text><text x="1249.500" y="379" textLength="42" lengthAdjust="spacingAndGlyphs">C12@200</text>
              <text transform="translate(1285 348) rotate(-90)" text-anchor="middle" textLength="42" lengthAdjust="spacingAndGlyphs">C12@200</text>
              <text transform="translate(1076 362.700) rotate(-90)" text-anchor="middle">1200</text>
              <text transform="translate(1236 402) rotate(-90)" text-anchor="middle">100</text>
              <text transform="translate(1325 337.700) rotate(-90)" text-anchor="middle">0</text>
              <text transform="translate(1324 377.300) rotate(-90)" text-anchor="middle">10*d</text>
            </g>
            <text x="1205.700" y="527" text-anchor="middle" font-size="28" font-weight="300" fill="#fff">均不翻起二</text>
            <text x="1186.700" y="562" text-anchor="middle" font-size="30" fill="#fff" font-family="Liberation Serif">1-1</text>
          </svg>
          <div class="h-[44px] pt-[2px] border-b border-[#a8a8a8] bg-[#f0f0f0] flex items-center justify-end pr-[26px] shrink-0 w-[686px]">
            <div class="w-[73px] h-[22px] border-2 border-[#0078d7] bg-[#e1e1e1] flex items-center justify-center">配筋形式</div>
          </div>
        </div>
      </div>
    </div>
  </div>

  <!-- status bar -->
  <div class="h-[19px] flex gap-[2px] [font-family:'Liberation_Mono','Noto_Sans_CJK_SC',monospace] text-[10px]">
    <div class="w-[148px] border border-[#dcdcdc] bg-[#f7f7f7]"></div>
    <div class="w-[78px] border border-[#dcdcdc] bg-[#f7f7f7] flex items-center pl-px"><span class="text-[12px] [font-family:'Noto_Sans_CJK_SC']">层高</span>:2.15m</div>
    <div class="w-[98px] border border-[#dcdcdc] bg-[#f7f7f7] flex items-center pl-px"><span class="text-[12px] [font-family:'Noto_Sans_CJK_SC']">底标高</span>:-2.2m</div>
    <div class="w-[49px] border border-[#dcdcdc] bg-[#f7f7f7] flex items-center pl-px">0</div>
    <div class="w-[915px] border border-[#dcdcdc] bg-[#f7f7f7] flex items-center text-[12px] [font-family:'Noto_Sans_CJK_SC']">名称在当前层当前构件类型下不允许重名</div>
    <div class="flex-1 border border-[#dcdcdc] bg-[#f7f7f7] flex items-center pl-px">252.1 FPS</div>
  </div>

  <!-- taskbar -->
  <div class="h-[41px] flex text-white">
    <div class="w-[48px] bg-black flex items-center justify-center">
      <svg class="w-[16px] h-[16px]" viewBox="0 0 16 16"><path d="M0 2.200l6.500-1v6.300H0zM7.500 1l8.500-1v7.500H7.500zM0 8.500h6.500v6.300l-6.500-1zM7.500 8.500H16V16l-8.500-1z" fill="#fff"/></svg>
    </div>
    <div class="w-[344px] bg-[#333] flex items-center">
      <svg class="ml-[10px] w-[20px] h-[20px]" viewBox="0 0 20 20"><circle cx="10" cy="10" r="8" fill="none" stroke="#e6e6e6" stroke-width="2.200"/></svg>
      <span class="ml-[6px] text-[14px] text-[#9a9a9a]">在这里输入你要搜索的内容</span>
      <svg class="ml-[113px] w-[12px] h-[18px]" viewBox="0 0 12 18"><rect x="3.500" y=".5" width="5" height="10" rx="2.500" fill="none" stroke="#8e8e8e"/><path d="M1 7c0 7 10 7 10 0M6 13v3M3 17h6" fill="none" stroke="#8e8e8e"/></svg>
    </div>
    <div class="w-[644px] bg-[#1f1f1f] flex flex-col relative">
      <div class="h-[36px] flex items-center bg-[#262626]">
        <svg class="ml-[12px] w-6 h-5" viewBox="0 0 24 20"><rect x="7.500" y="1.500" width="9" height="15" fill="none" stroke="#fff"/><path d="M5 4H2.500v10H5M19 4h2.500v10H19" fill="none" stroke="#fff"/></svg>
        <svg class="ml-[26px] w-6 h-6" viewBox="0 0 24 24"><g fill="#e6e6e6"><path d="M3 4c4-2 8-1 8 7-5 0-9-2-8-7z"/><path d="M21 4c-4-2-8-1-8 7 5 0 9-2 8-7z"/><path d="M3 20c4 2 8 1 8-7-5 0-9 2-8 7z"/><path d="M21 20c-4 2-8 1-8-7 5 0 9 2 8 7z"/></g></svg>
        <svg class="ml-[28px] w-6 h-6" viewBox="0 0 24 24"><path d="M19 13H5c0-6 3-8 7-8s7 3 7 8zM6 14c1 6 9 8 12 3" fill="none" stroke="#eee" stroke-width="2.600"/><path d="M3 21C6 10 14 2 22 3" fill="none" stroke="#9a9a9a"/></svg>
        <svg class="ml-[26px] w-6 h-6" viewBox="0 0 24 24"><path d="M12 4a8 8 0 1 1-7 4M12 7a5 5 0 1 1-4 3M13 10a2 2 0 1 1-2 1" fill="none" stroke="#bdbdbd" stroke-width="1.300"/></svg>
        <svg class="ml-[26px] w-6 h-6" viewBox="0 0 24 24"><path d="M3 13C3 6 8 3 13 3c6 0 9 4 9 10H9c0 4 6 6 12 3v4c-8 3-15 0-15-6 0-3 1-4 3-6-3 1-4 3-6 5zM9 10h8c0-3-6-4-8 0z" fill="#0078d7"/></svg>
        <svg class="ml-[23px] w-6 h-6" viewBox="0 0 24 24"><circle cx="12" cy="12" r="8" fill="none" stroke="#2b95e8" stroke-width="3.500"/><path d="M4 12h16" stroke="#2b95e8" stroke-width="2.500"/><path d="M22 2c-8-2-17 6-20 17 0 3 3 3 7 1" fill="none" stroke="#f2c230" stroke-width="1.400"/></svg>
        <svg class="ml-[20px] w-6 h-6" viewBox="0 0 24 24"><path d="M2 3h8l2 3h10v15H2z" fill="#f7d97a"/><path d="M2 8h20" stroke="#fff3c4"/><rect x="8" y="14" width="8" height="7" fill="#3aa0e8"/><path d="M6 16l6-4 6 4" fill="#3aa0e8"/></svg>
        <svg class="ml-[21px] w-6 h-6" viewBox="0 0 24 24"><circle cx="12" cy="12" r="10" fill="#7ac943"/><path d="M7 12h10c0-6-10-6-10 0 0 5 6 7 10 4" fill="none" stroke="#fff" stroke-width="2.200"/><path d="M15 2l5-2" stroke="#7ac943" stroke-width="2"/></svg>
        <svg class="ml-[21px] w-6 h-6" viewBox="0 0 24 24"><path d="M22 3C12 0 2 5 3 14c.5 6 7 8 12 6 5-2 6-8 2-9.500-3-1-6 0-7 2l3 1c1-1 3-1 3 1-.5 2-4 3-6 1-2-3 0-9 12-11z" fill="#1e8fe6"/></svg>
        <div class="ml-[11px] w-[44px] h-[36px] bg-[#4f4f4f] flex items-center justify-center">
          <svg class="w-[24px] h-[24px]"><use href="#logo"/></svg>
        </div>
        <svg class="ml-[10px] w-6 h-6" viewBox="0 0 24 24"><rect x="2" y="2" width="20" height="21" rx="2" fill="#f5a623"/><rect x="5" y="5" width="13" height="15" fill="#fdf3d3" transform="rotate(-12 12 12)"/><path d="M7 9h8M7 12h8M8 15h6" stroke="#9a7a3a" transform="rotate(-12 12 12)"/><path d="M20 2l-5 9" stroke="#c44" stroke-width="2"/></svg>
        <span class="ml-[23px] w-[24px] text-[12px] text-[#e0e0e0] whitespace-nowrap">链接</span>
        <div class="ml-[16px] w-[60px] mt-[3px] flex flex-col items-center gap-[6px] text-[13px]"><span>17%</span><span class="whitespace-nowrap">CPU使用</span></div>
      </div>
      <div class="h-[5px] flex items-end">
        <div class="ml-[344px] w-[36px] h-[3px] bg-[#6fb4ea]"></div>
        <div class="ml-[9px] w-[36px] h-[3px] bg-[#6fb4ea]"></div>
        <div class="ml-[6px] w-[43px] h-[3px] bg-[#6fb4ea]"></div>
        <div class="ml-[6px] w-[35px] h-[3px] bg-[#6fb4ea]"></div>
      </div>
    </div>
    <div class="flex-1 bg-[#0f171b] flex items-center pb-[2px]">
      <svg class="w-[14px] h-[8px]" viewBox="0 0 14 8"><path d="M1 7l6-6 6 6" fill="none" stroke="#fff" stroke-width="1.200"/></svg>
      <svg class="ml-[9px] w-[14px] h-[16px]" viewBox="0 0 14 16"><path d="M7 0c3 0 4 3 4 6 0 3 1 5 2.500 6.500H.5C2 11 3 9 3 6c0-3 1-6 4-6zM5 14h4l-2 2z" fill="#fff"/></svg>
      <svg class="ml-[10px] w-[16px] h-[16px]" viewBox="0 0 16 16"><path d="M1 1v4M4 1v4" stroke="#fff"/><rect x="1" y="6" width="11" height="8" fill="none" stroke="#fff"/><rect x="5" y="8" width="6" height="5" fill="#fff"/><path d="M12 9h3v3h-3" fill="none" stroke="#fff"/></svg>
      <svg class="ml-[9px] w-[16px] h-[16px]" viewBox="0 0 16 16"><path d="M1 15a14 14 0 0 1 14-14M4 15A11 11 0 0 1 15 4M7 15a8 8 0 0 1 8-8" fill="none" stroke="#bbb"/><path d="M10 15a5 5 0 0 1 5-5v5z" fill="#fff"/></svg>
      <svg class="ml-[7px] w-[14px] h-[16px]" viewBox="0 0 14 16"><path d="M1 5.500h2.500L7 2v12L3.500 10.500H1zM9 5.500a3.500 3.500 0 0 1 0 5M11 3.500a6.500 6.500 0 0 1 0 9" fill="none" stroke="#fff"/></svg>
      <svg class="ml-[10px] w-[24px] h-[16px]" viewBox="0 0 24 16"><rect x=".5" y=".5" width="23" height="15" fill="none" stroke="#fff"/><path d="M3 4h18M3 7h18M3 10h18" stroke="#fff" stroke-dasharray="2 1"/><path d="M6 13h12" stroke="#fff"/></svg>
      <span class="ml-[9px] w-[14px] text-[14px]">中</span>
      <svg class="ml-[13px] w-[16px] h-[18px]" viewBox="0 0 16 18"><path d="M3 1h12l-1 16H1z" fill="#ee4d2d"/><path d="M11 5H6.500v3.500H10V12H5" fill="none" stroke="#fff" stroke-width="2"/></svg>
      <div class="ml-[12px] w-[70px] flex flex-col items-center gap-[6px] text-[13px]"><span>14:00</span><span class="whitespace-nowrap">2018/7/21</span></div>
      <svg class="ml-[11px] w-[20px] h-[18px]" viewBox="0 0 20 18"><path d="M2.500 1.500h15v12h-6l-2 3-2-3h-5z" fill="none" stroke="#fff" stroke-width="1.300"/></svg>
    </div>
  </div>

  <!-- faint window title behind the taskbar -->
  <span class="absolute left-[958px] top-[742px] text-[12px] text-[#4b4b4b] whitespace-nowrap [font-family:'Liberation_Sans']">4000-166-166</span>

  <!-- sogou floating bar -->
  <div class="absolute left-[1000px] top-0 w-[175px] h-[26px] bg-white border border-t-0 border-[#a9c8e4] flex items-center">
    <svg class="ml-[1px] w-[12px] h-[14px]" viewBox="0 0 12 14"><path d="M3 1h5v6h3v2H7v5H5V9H1V7h2z" fill="#2a78d0"/></svg>
    <span class="ml-[10px] w-[12px] text-[13px] font-bold text-[#1a5fb0]">°,</span>
    <svg class="ml-[9px] w-[16px] h-[16px]" viewBox="0 0 16 16"><circle cx="8" cy="8" r="7" fill="none" stroke="#1a6fcf" stroke-width="1.500"/><circle cx="5.500" cy="6" r="1" fill="#1a6fcf"/><circle cx="10.500" cy="6" r="1" fill="#1a6fcf"/><path d="M4.500 10c1.500 2 5.500 2 7 0" fill="none" stroke="#1a6fcf"/></svg>
    <svg class="ml-[8px] w-[12px] h-[17px]" viewBox="0 0 12 17"><rect x="3" y="0" width="6" height="11" rx="3" fill="#1a6fcf"/><path d="M1 7c0 6 10 6 10 0M6 12v4M3 16h6" fill="none" stroke="#1a6fcf"/></svg>
    <svg class="ml-[8px] w-[15px] h-[13px]" viewBox="0 0 15 13"><rect width="15" height="13" rx="1" fill="#1a6fcf"/><path d="M2 3h11M2 6h11M2 9h11" stroke="#fff" stroke-dasharray="1.500 1"/></svg>
    <svg class="ml-[9px] w-[15px] h-[17px]" viewBox="0 0 15 17"><circle cx="6" cy="4" r="3" fill="#a9c0d8"/><path d="M1 14c0-5 2-6 5-6s4 2 4 5v1z" fill="#a9c0d8"/></svg>
    <svg class="ml-[5px] w-[14px] h-[15px]" viewBox="0 0 14 15"><path d="M4 0l3 1.500L10 0l4 3-2 3-1-1v10H3V5L2 6 0 3z" fill="#1a6fcf"/></svg>
    <svg class="ml-[9px] w-[14px] h-[17px]" viewBox="0 0 14 17"><path d="M8 1c3-1 5 0 6 2l-3 2-1-1-1 1 1 1c-1 2-2 3-4 3l-3 7-3-1 2-7C2 6 5 2 8 1z" fill="#1a6fcf"/></svg>
  </div>
  <svg class="absolute left-[968px] top-[8px] w-[28px] h-[20px]" viewBox="0 0 28 20"><path d="M2 0h24l-2 10c-4 8-14 10-21 9C8 14 14 14 18 12 10 12 3 8 2 0z" fill="#f05a28"/></svg>
  <div class="absolute left-[970px] -top-[26px] w-[46px] h-[46px] rounded-full bg-[#43b149] border-2 border-[#b7dfa5] flex items-end justify-center pb-[5px] text-white text-[13px] [font-family:'Liberation_Sans']">69</div>

  <!-- dialog -->
  <div class="absolute left-[111px] top-[104px] w-[636px] h-[502px] bg-[#f0f0f0] border border-[#3d9ae8] shadow-[0_4px_22px_rgba(0,0,0,0.38)] flex flex-col">
    <div class="h-[31px] pb-[2px] bg-white flex items-center shrink-0">
      <svg class="ml-[9px] w-[16px] h-[16px]"><use href="#logo"/></svg>
      <span class="ml-[5px]">配筋形式</span>
      <div class="ml-auto w-[10px] h-px bg-[#bbb] mr-[35px]"></div>
      <div class="w-[11px] h-[11px] border border-black mr-[34px]"></div>
      <svg class="w-[13px] h-[13px] mr-[15px]" viewBox="0 0 13 13"><path d="M.5.500l12 12M12.500.500l-12 12" stroke="#111"/></svg>
    </div>
    <div class="h-[422px] shrink-0 flex overflow-hidden">
      <div class="w-[617px] pl-[4px] flex flex-col gap-[5px] shrink-0">
        <!-- row 1 -->
        <div class="flex gap-[5px] h-[100px] shrink-0">
          <svg class="block w-[302px] h-[100px] bg-black" viewBox="116 136 302 100" fill="none" font-family="Noto Sans CJK SC">
            <path d="M191.700 136l20 29.700H330l19.300-29.700M205.700 174l7.600 11h118.400l7.600-11" stroke="#ff0000" stroke-width="1.400"/>
            <path d="M259.500 136v19M278.500 136v19M254.300 155.500h27.400M248.300 231.500h34.400" stroke="#fff"/>
            <text transform="translate(342 184) rotate(-60)" text-anchor="middle" font-size="7" fill="#00ff00" font-family="Liberation Mono">DW2</text>
            <text x="271.700" y="207" text-anchor="middle" font-size="18" font-weight="300" fill="#fff">隔根翻起</text>
            <text x="266.700" y="227" text-anchor="middle" font-size="19" fill="#d8ecff" font-family="Liberation Serif">1-1</text>
          </svg>
          <svg class="block w-[302px] h-[100px] bg-black" viewBox="423 136 302 100" fill="none" font-family="Noto Sans CJK SC">
            <path d="M486.700 137.700h10.600l21 33h117.700" stroke="#ff0000" stroke-width="1.400"/>
            <path d="M518.300 176.700h119l21-31.700h8.400" stroke="#ff0000" stroke-width="1.400"/>
            <path d="M566.500 136v19M585.500 136v19M561 155.500h28M555 231.500h35" stroke="#fff"/>
            <text x="577.700" y="207" text-anchor="middle" font-size="18" font-weight="300" fill="#fff">交错翻起</text>
            <text x="573.300" y="227" text-anchor="middle" font-size="19" fill="#ffe8c8" font-family="Liberation Serif">1-1</text>
          </svg>
        </div>
        <!-- row 2 -->
        <div class="flex gap-[5px] h-[205px] shrink-0">
          <svg class="block w-[302px] h-[205px] bg-black" viewBox="116 241 302 205" fill="none" font-family="Noto Sans CJK SC">
            <g id="c3w">
              <g stroke="#fff" stroke-width=".9">
                <path d="M264.500 247v42M284.500 247v42M259 247.500h28M180 289.500h182M173.500 289.500v47M170 289.500h7M170 336.500h7M178 297.500h20M181.700 303.500h16.300M193.300 292l22.700 44.500M194 336.500h133M326.700 336.500l35-46.500M200 336.500a10 10 0 0 1 7-10"/>
                <path d="M243.300 280.700h-14v16M286.700 280.700h30M286.700 280.700l-6 10M294 280.700l-6 10M301.700 280.700l-6 10M309 280.700l-6 10M250 315h-14.300v10.700M280 318.300h26.700M280 318.300l-8 5.700M290 318.300l-8 5.700M300 318.300l-8 5.700M306.700 318.300l-8 5.700"/>
                <path d="M182.700 320h10l19-15M215 300v0M333 311h15"/>
                <path d="M261.500 327v39M280.500 327v39M255 366.500h28M285 327v9"/>
              </g>
              <g font-size="8.600" fill="#fff">
                <text x="205" y="278">横向面筋</text><text x="285.700" y="279">纵向面筋</text><text x="221" y="313">横向底筋</text><text x="272" y="318">纵向底筋</text>
                <text transform="translate(352 286) rotate(-60)" text-anchor="middle" font-size="7.500">放坡长度</text>
              </g>
              <g font-size="8" fill="#00ff00" font-family="Liberation Mono">
                <text x="239" y="278">XMJ</text><text x="320" y="279">YMJ</text><text x="255" y="313">XDJ</text><text x="306" y="318">YDJ</text>
                <text x="347.700" y="318">CMJ1</text>
                <text transform="translate(210 301) rotate(-90)" text-anchor="middle">UWZ</text>
                <text transform="translate(172 313) rotate(-90)" text-anchor="middle" font-size="9">h</text>
                <text transform="translate(202 329) rotate(-60)" text-anchor="middle">FPJ</text>
                <text transform="translate(289 332) rotate(90)" text-anchor="middle">BBC</text>
              </g>
            </g>
            <path d="M216 308v-16h112v17M192 292l20 32h119l21-32M212 378h119" stroke="#ff0000" stroke-width="1.800"/>
            <path d="M182 292h10l20 32M214 325h14M314 325h17l21-33h10M182 348h10l20 30M331 378l20-30h10M212 381.500h16M314 381.500h17" stroke="#ff00ff" stroke-width="1.400"/>
            <path d="M218 292.500h110M215 322.700h114" stroke="#ffff00" stroke-dasharray="1 7"/>
            <path d="M212 385h16M212 381v6M228 381v6M249 441.500h35M320 358l9 5-7 13" stroke="#fff" stroke-width=".9"/>
            <g font-size="8" fill="#00ff00" font-family="Liberation Mono">
              <text x="175" y="328">CMJ2</text><text x="214" y="393">XVZ</text>
              <text transform="translate(323 367) rotate(-60)" text-anchor="middle">DW2</text>
            </g>
            <text x="281.700" y="417" text-anchor="middle" font-size="18" font-weight="300" fill="#fff">均不翻起一</text>
            <text x="269" y="437" text-anchor="middle" font-size="19" fill="#d8ecff" font-family="Liberation Serif">1-1</text>
          </svg>
          <svg class="block w-[302px] h-[205px] bg-black border-[3px] border-[#ff0000]" viewBox="426 244 296 199" fill="none" font-family="Noto Sans CJK SC">
            <rect x="499.500" y="265.500" width="150" height="63" stroke="#fff"/>
            <path d="M502.700 286.700v-20h144v20M502.700 297.300V316h144v-18.700M502.700 368.300v18.400h144v-18.400" stroke="#ff0000" stroke-width="1.800"/>
            <path d="M505 267h142M505 315h142" stroke="#ffff00" stroke-dasharray="1 6.500"/>
            <g stroke="#fff" stroke-width=".9">
              <path d="M492.500 265.500v63M489 265.500h7M489 328.500h7M656.500 267v23M653 267h7M653 290h7M656.500 297v21M653 297h7M653 318h7"/>
              <path d="M546.700 254.700h-15v17M600 255h27.300M600 255l-7 11M607.500 255l-7 11M615 255l-7 11M622.500 255l-7 11"/>
              <path d="M548.300 293.300h-11v24.400M590 310h25M590 310l-7 5M598 310l-7 5M606 310l-7 5M614 310l-7 5"/>
              <path d="M638 290l8 8M638 295l8 8M638 300l8 8"/>
              <path d="M561.500 376v-56.500h21V376M555 376.500h8l1.500 3 1.500-6 1.500 3h19M594 318v10M547 441.500h39"/>
            </g>
            <g font-size="8.600" fill="#fff">
              <text x="507.300" y="252.500">横向面筋</text><text x="593.300" y="253">纵向面筋</text><text x="523.300" y="290.500">横向底筋</text><text x="578.700" y="307.500">纵向底筋</text>
              <text transform="translate(628 285) rotate(-90)" text-anchor="middle">侧面筋</text>
            </g>
            <g font-size="8" fill="#00ff00" font-family="Liberation Mono">
              <text x="542" y="252.500">XMJ</text><text x="629" y="253">YMJ</text><text x="558" y="290.500">XDJ</text><text x="613" y="307.500">YDJ</text>
              <text transform="translate(638 292) rotate(-90)" text-anchor="middle">CLJ</text>
              <text transform="translate(487 296) rotate(-90)" text-anchor="middle" font-size="9">h</text>
              <text transform="translate(661 277) rotate(90)" text-anchor="middle">ZWM</text>
              <text transform="translate(661 307) rotate(90)" text-anchor="middle">DWZ</text>
              <text transform="translate(596 324) rotate(90)" text-anchor="middle">BBC</text>
            </g>
            <text x="581.700" y="414" text-anchor="middle" font-size="20.500" font-weight="300" fill="#fff">均不翻起二</text>
            <text x="567.700" y="437" text-anchor="middle" font-size="21" fill="#d8ecff" font-family="Liberation Serif">1-1</text>
          </svg>
        </div>
        <!-- row 3 -->
        <div class="flex gap-[5px] h-[107px] shrink-0">
          <svg class="block w-[302px] h-[107px] bg-black" viewBox="116 451 302 107" fill="none" font-family="Noto Sans CJK SC">
            <use href="#c3w" y="210"/>
            <path d="M216 518v-16h112v17M182 502h10l20 32h119l21-32h10" stroke="#ff0000" stroke-width="1.800"/>
            <path d="M218 502.500h110M215 532.700h114" stroke="#ffff00" stroke-dasharray="1 7"/>
            <path d="M182 557.500h10M322 557.500h10" stroke="#ff0000" stroke-width="2"/>
          </svg>
          <svg class="block w-[302px] h-[107px] bg-black" viewBox="423 451 302 107" fill="none" font-family="Noto Sans CJK SC">
            <path d="M483.500 470h167.300M514 514h131.500M483.500 470l0 10h15M495.700 472.700L514 514M640.600 472.700L620 514M528.400 463v18M557.500 506.700V532M575.500 506.700V532M552 532.500h26M547.500 555.500h30M620 514l30.800-36M650.800 470v10" stroke="#fff" stroke-width=".9"/>
            <path d="M483.500 472.700h12.200L514 506.700M514 506.700h18.400M600 506.700h20l20.600-34h10.200" stroke="#ff00ff" stroke-width="1.500"/>
            <path d="M516 488v-15.300h105V488" stroke="#00ff00" stroke-width="1.600"/>
            <path d="M516 488v18h104.500v-18" stroke="#ffff00" stroke-width="1.600"/>
            <path d="M516 480h104M516 485.700h104M516 491.700h104" stroke="#00ffff" stroke-width="1.600"/>
            <path d="M563.500 473v32M568.500 473v32M573.500 473v32M578.500 473v32M583.500 473v32M588.500 473v32" stroke="#ff0000" stroke-width="1.200"/>
            <g font-size="8.600" fill="#fff">
              <text x="508" y="461">上部筋</text><text x="523" y="500">侧面筋</text><text x="588" y="500">腹筋</text><text x="544.700" y="524">下部筋</text><text x="582" y="557">拉筋</text>
              <text transform="translate(635 478) rotate(-60)" text-anchor="middle" font-size="7.500">放坡长度</text>
            </g>
            <g font-size="8" fill="#00ff00" font-family="Liberation Mono">
              <text x="532.400" y="461">SBJ</text><text x="549" y="500">CGJ</text><text x="605" y="500">GJ</text><text x="571" y="524">XBJ</text><text x="599" y="557">LJ</text><text x="629" y="510">FPJ</text>
              <text transform="translate(510 488) rotate(-90)" text-anchor="middle">XVZ.5 IVZ</text>
            </g>
            <text x="564" y="552" text-anchor="middle" font-size="19" fill="#fff" font-family="Liberation Serif">1-1</text>
          </svg>
        </div>
      </div>
      <div class="ml-[1px] w-[17px] flex flex-col items-center bg-[#f0f0f0]">
        <svg class="mt-[7px] w-[9px] h-[6px]" viewBox="0 0 9 6"><path d="M.5 5.500l4-4 4 4" fill="none" stroke="#606060" stroke-width="1.500"/></svg>
        <div class="mt-[53px] w-full h-[195px] bg-[#cdcdcd]"></div>
        <svg class="mt-[149px] w-[9px] h-[6px]" viewBox="0 0 9 6"><path d="M.5.500l4 4 4-4" fill="none" stroke="#606060" stroke-width="1.500"/></svg>
      </div>
    </div>
    <div class="flex-1 border-t border-[#c8c8c8] flex items-start justify-end pt-[11px] pr-[33px] gap-[15px]">
      <div class="w-[89px] h-[24px] border-2 border-[#0078d7] bg-[#e1e1e1] flex items-center justify-center">确定</div>
      <div class="w-[89px] h-[24px] border border-[#adadad] bg-[#e1e1e1] flex items-center justify-center">取消</div>
    </div>
  </div>
</div>
</body>
</html>
